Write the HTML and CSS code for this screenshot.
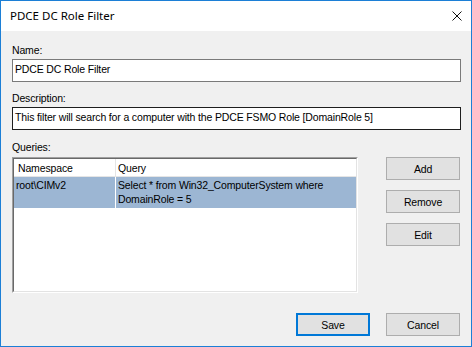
FILE: index.html
```html
<!DOCTYPE html>
<html lang="en">
  <head>
    <meta charset="utf-8" />
    <title>PDCE DC Role Filter</title>
    <link rel="stylesheet" href="styles.css">
  </head>
  <body>
    <div class="window">
      <header class="titlebar">
        <span class="title">PDCE DC Role Filter</span>
        <svg class="close" width="10" height="10" viewBox="0 0 10 10">
          <path d="M0.5 0.5 L9.5 9.5 M9.5 0.5 L0.5 9.5" stroke="#111" stroke-width="1" fill="none" />
        </svg>
      </header>

      <main class="content">
        <div class="label">Name:</div>
        <div class="textbox">PDCE DC Role Filter</div>

        <div class="label label-desc">Description:</div>
        <div class="textbox textbox-dark">This filter will search for a computer with the PDCE FSMO Role [DomainRole 5]</div>

        <div class="label label-queries">Queries:</div>
        <div class="queries">
          <div class="listview">
            <div class="listview-inner">
              <div class="lv-head">
                <div class="lv-col lv-ns">Namespace</div>
                <div class="lv-col lv-query">Query</div>
              </div>
              <div class="lv-row selected">
                <div class="lv-cell lv-ns">root\CIMv2</div>
                <div class="lv-cell lv-query">Select * from Win32_ComputerSystem where<br>DomainRole = 5</div>
              </div>
            </div>
          </div>
          <div class="side-buttons">
            <button class="btn">Add</button>
            <button class="btn">Remove</button>
            <button class="btn">Edit</button>
          </div>
        </div>

        <div class="footer">
          <button class="btn btn-default">Save</button>
          <button class="btn">Cancel</button>
        </div>
      </main>
    </div>
  </body>
</html>
```

FILE: styles.css
```css
html,
body {
  height: 100%;
  margin: 0;
  padding: 0;
  overflow: hidden;
  font-family: 'Liberation Sans', Arial, sans-serif;
  font-size: 10.5px;
  letter-spacing: -0.15px;
  color: #000;
}
.window {
  width: 472px;
  height: 347px;
  box-sizing: border-box;
  border: 1px solid #1c7fd6;
  background: #f0f0f0;
  display: flex;
  flex-direction: column;
}
.titlebar {
  height: 30px;
  background: #fff;
  display: flex;
  align-items: center;
  justify-content: space-between;
  padding: 0 9px 0 9px;
  box-sizing: border-box;
}
.title {
  font-family: 'Noto Sans', sans-serif;
  font-size: 11.5px;
  letter-spacing: 0;
  margin-top: -1px;
}
.close {
  display: block;
}
.content {
  padding: 13px 10px 0 11px;
  display: flex;
  flex-direction: column;
}
.label {
  line-height: 13px;
  height: 13px;
  margin-bottom: 2px;
}
.label-desc {
  margin-top: 10px;
}
.label-queries {
  margin-top: 11px;
  margin-bottom: 3px;
}
.textbox {
  height: 23px;
  box-sizing: border-box;
  border: 1px solid #7a7a7a;
  background: #fff;
  padding: 3px 2px 0 2px;
  line-height: 13px;
  white-space: nowrap;
  overflow: hidden;
}
.textbox-dark {
  border-color: #1e1e1e;
}
.queries {
  display: flex;
  align-items: flex-start;
}
.listview {
  width: 346px;
  height: 136px;
  box-sizing: border-box;
  border: 1px solid;
  border-color: #a0a0a0 #fff #fff #a0a0a0;
}
.listview-inner {
  height: 100%;
  box-sizing: border-box;
  border: 1px solid;
  border-color: #696969 #e3e3e3 #e3e3e3 #696969;
  background: #fff;
}
.lv-head {
  display: flex;
  height: 18px;
  box-sizing: border-box;
  border-bottom: 1px solid #e5e5e5;
  line-height: 13px;
}
.lv-col {
  padding-top: 3px;
  box-sizing: border-box;
}
.lv-ns {
  width: 102px;
  flex: none;
  box-sizing: border-box;
  border-right: 1px solid #e5e5e5;
}
.lv-head .lv-ns {
  padding-left: 4px;
}
.lv-query {
  flex: 1;
  padding-left: 2px;
}
.lv-row {
  display: flex;
  height: 31px;
  line-height: 14px;
}
.lv-cell {
  padding-top: 1px;
  padding-left: 2px;
}
.lv-row .lv-ns {
  border-right-color: #fff;
}
.selected .lv-cell {
  background: #9cb6d3;
}
.side-buttons {
  margin-left: auto;
  margin-right: 1px;
  display: flex;
  flex-direction: column;
  gap: 10px;
}
.btn {
  width: 74px;
  height: 23px;
  box-sizing: border-box;
  border: 1px solid #adadad;
  background: #e1e1e1;
  font-family: 'Liberation Sans', Arial, sans-serif;
  font-size: 10.5px;
  letter-spacing: -0.15px;
  color: #000;
  padding: 0;
  margin: 0;
}
.btn-default {
  border-color: #0078d7;
  box-shadow: inset 0 0 0 1px #0078d7;
}
.footer {
  margin-top: 20px;
  margin-right: 1px;
  display: flex;
  justify-content: flex-end;
  gap: 16px;
}
```
